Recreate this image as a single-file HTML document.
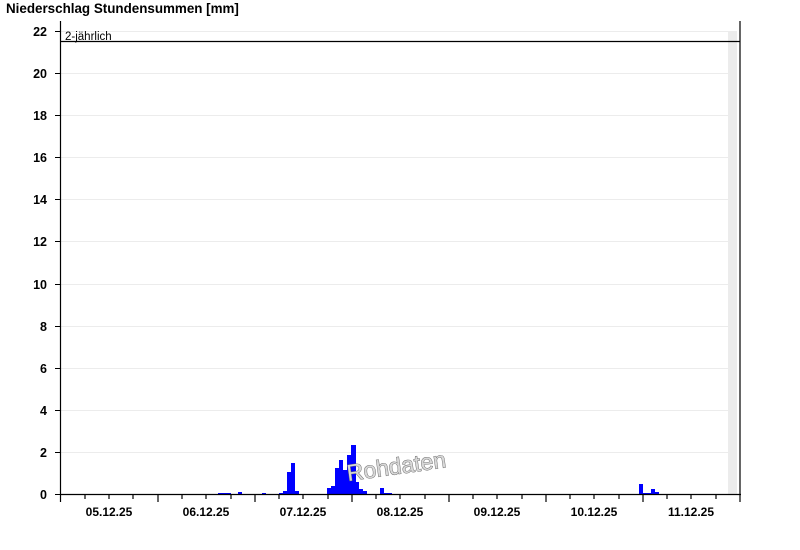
<!DOCTYPE html>
<html><head><meta charset="utf-8"><style>
html,body{margin:0;padding:0;background:#fff;width:800px;height:550px;overflow:hidden}
svg text{font-family:"Liberation Sans",Arial,sans-serif}
</style></head><body>
<svg width="800" height="550" viewBox="0 0 800 550" xmlns="http://www.w3.org/2000/svg">
<text x="6" y="13" font-size="13.4" font-weight="bold" fill="#000">Niederschlag Stundensummen [mm]</text>
<rect x="728" y="31" width="9" height="464" fill="#ececec"/>
<g stroke="#ececec" stroke-width="1">
<line x1="61" y1="31.5" x2="728" y2="31.5"/>
<line x1="61" y1="73.5" x2="728" y2="73.5"/>
<line x1="61" y1="115.5" x2="728" y2="115.5"/>
<line x1="61" y1="157.5" x2="728" y2="157.5"/>
<line x1="61" y1="199.5" x2="728" y2="199.5"/>
<line x1="61" y1="241.5" x2="728" y2="241.5"/>
<line x1="61" y1="284.5" x2="728" y2="284.5"/>
<line x1="61" y1="326.5" x2="728" y2="326.5"/>
<line x1="61" y1="368.5" x2="728" y2="368.5"/>
<line x1="61" y1="410.5" x2="728" y2="410.5"/>
<line x1="61" y1="452.5" x2="728" y2="452.5"/>
</g>
<g fill="#0000ff">
<rect x="218" y="493" width="13" height="2"/>
<rect x="238" y="492" width="4" height="3"/>
<rect x="262" y="493" width="4" height="2"/>
<rect x="279" y="493" width="4" height="2"/>
<rect x="283" y="491" width="4" height="4"/>
<rect x="287" y="472" width="4" height="23"/>
<rect x="291" y="463" width="4" height="32"/>
<rect x="295" y="491" width="4" height="4"/>
<rect x="327" y="488" width="4" height="7"/>
<rect x="331" y="486" width="4" height="9"/>
<rect x="335" y="468" width="4" height="27"/>
<rect x="339" y="460" width="4" height="35"/>
<rect x="343" y="470" width="4" height="25"/>
<rect x="347" y="455" width="4" height="40"/>
<rect x="351" y="445" width="5" height="50"/>
<rect x="356" y="482" width="3" height="13"/>
<rect x="359" y="489" width="4" height="6"/>
<rect x="363" y="491" width="4" height="4"/>
<rect x="380" y="488" width="4" height="7"/>
<rect x="384" y="493" width="8" height="2"/>
<rect x="639" y="484" width="4" height="11"/>
<rect x="643" y="493" width="8" height="2"/>
<rect x="651" y="489" width="4" height="6"/>
<rect x="655" y="492" width="4" height="3"/>
</g>
<g stroke="#000" stroke-width="1.2" fill="none">
<line x1="60.5" y1="21" x2="60.5" y2="495"/>
<line x1="740" y1="21" x2="740" y2="495"/>
<line x1="60" y1="494.5" x2="741" y2="494.5"/>
<line x1="61" y1="41.5" x2="740" y2="41.5"/>
</g>
<g stroke="#000" stroke-width="1">
<line x1="55" y1="31.5" x2="61" y2="31.5"/><line x1="55" y1="73.5" x2="61" y2="73.5"/><line x1="55" y1="115.5" x2="61" y2="115.5"/><line x1="55" y1="157.5" x2="61" y2="157.5"/><line x1="55" y1="199.5" x2="61" y2="199.5"/><line x1="55" y1="241.5" x2="61" y2="241.5"/><line x1="55" y1="284.5" x2="61" y2="284.5"/><line x1="55" y1="326.5" x2="61" y2="326.5"/><line x1="55" y1="368.5" x2="61" y2="368.5"/><line x1="55" y1="410.5" x2="61" y2="410.5"/><line x1="55" y1="452.5" x2="61" y2="452.5"/><line x1="55" y1="494.5" x2="61" y2="494.5"/>
</g>
<g font-size="12.5" font-weight="bold" fill="#000" text-anchor="end">
<text x="47" y="36">22</text><text x="47" y="78">20</text><text x="47" y="120">18</text><text x="47" y="162">16</text><text x="47" y="204">14</text><text x="47" y="246">12</text><text x="47" y="289">10</text><text x="47" y="331">8</text><text x="47" y="373">6</text><text x="47" y="415">4</text><text x="47" y="457">2</text><text x="47" y="499">0</text>
</g>
<text x="65" y="40" font-size="11.5" fill="#000">2-jährlich</text>
<g font-size="12" font-weight="bold" fill="#000" text-anchor="middle">
<text x="109" y="516">05.12.25</text><text x="206" y="516">06.12.25</text><text x="303" y="516">07.12.25</text><text x="400" y="516">08.12.25</text><text x="497" y="516">09.12.25</text><text x="594" y="516">10.12.25</text><text x="691" y="516">11.12.25</text>
</g>
<text x="348" y="481" font-size="23" fill="#d8d8d8" stroke="#666" stroke-width="0.9" transform="rotate(-8 348 481)" paint-order="stroke">Rohdaten</text>
<g stroke="#000" stroke-width="1.2">
<line x1="60.5" y1="495" x2="60.5" y2="502"/><line x1="85" y1="495" x2="85" y2="499"/><line x1="109" y1="495" x2="109" y2="499"/><line x1="133" y1="495" x2="133" y2="499"/>
<line x1="158" y1="495" x2="158" y2="502"/><line x1="182" y1="495" x2="182" y2="499"/><line x1="206" y1="495" x2="206" y2="499"/><line x1="231" y1="495" x2="231" y2="499"/>
<line x1="255" y1="495" x2="255" y2="502"/><line x1="279" y1="495" x2="279" y2="499"/><line x1="303" y1="495" x2="303" y2="499"/><line x1="328" y1="495" x2="328" y2="499"/>
<line x1="352" y1="495" x2="352" y2="502"/><line x1="376" y1="495" x2="376" y2="499"/><line x1="400" y1="495" x2="400" y2="499"/><line x1="425" y1="495" x2="425" y2="499"/>
<line x1="449" y1="495" x2="449" y2="502"/><line x1="473" y1="495" x2="473" y2="499"/><line x1="497" y1="495" x2="497" y2="499"/><line x1="522" y1="495" x2="522" y2="499"/>
<line x1="546" y1="495" x2="546" y2="502"/><line x1="570" y1="495" x2="570" y2="499"/><line x1="594" y1="495" x2="594" y2="499"/><line x1="619" y1="495" x2="619" y2="499"/>
<line x1="643" y1="495" x2="643" y2="502"/><line x1="667" y1="495" x2="667" y2="499"/><line x1="691" y1="495" x2="691" y2="499"/><line x1="716" y1="495" x2="716" y2="499"/>
<line x1="740" y1="495" x2="740" y2="502"/>
</g>
</svg>
</body></html>
